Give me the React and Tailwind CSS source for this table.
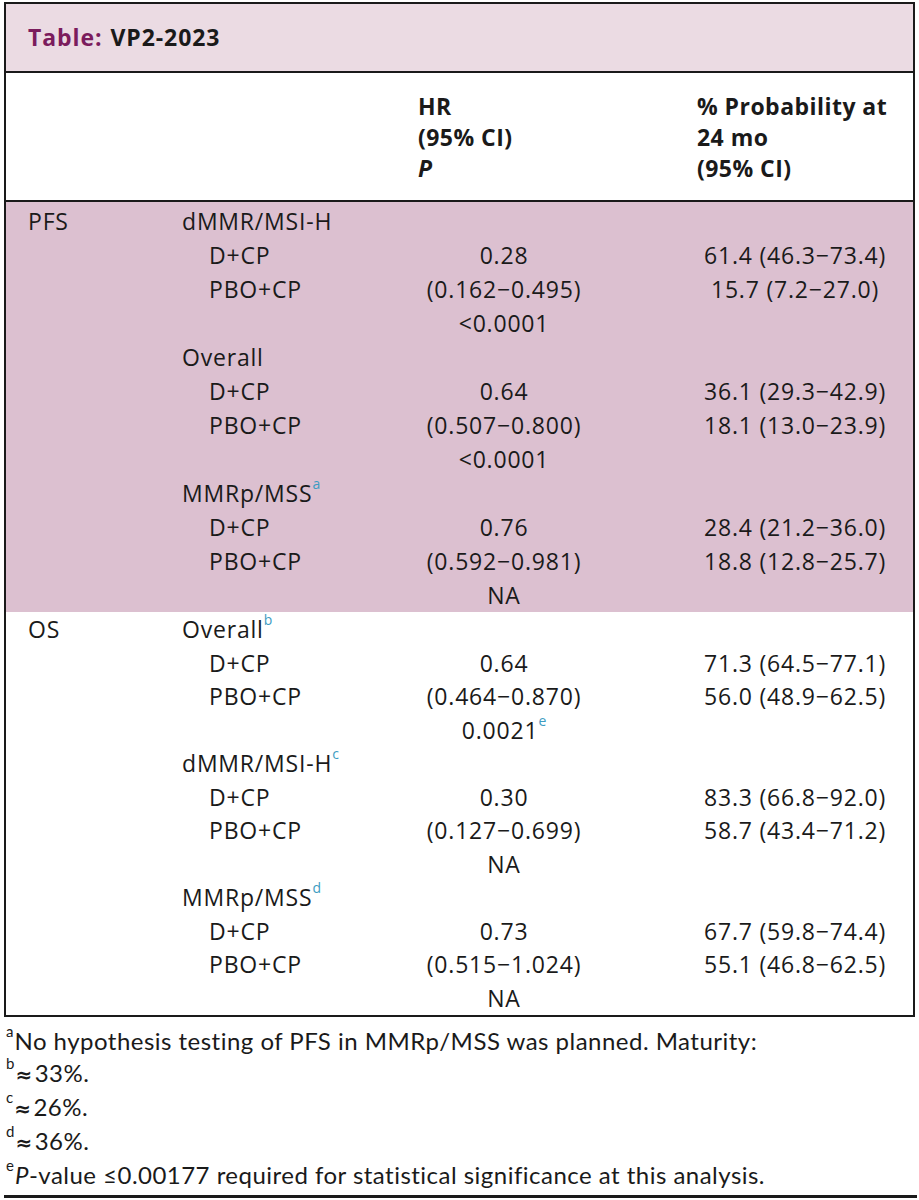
import React from "react";

const sup = "text-[#3d9cc2] text-[14px] align-[6px] leading-[0] tracking-normal";

const Row = ({ a, b, sub, hr, prob }) => (
    <div className="flex">
        <div className="w-[176px] pl-[22px]">{a}</div>
        <div className={sub ? "w-[236px] pl-[27px]" : "w-[236px]"}>{b}</div>
        <div className="w-[172px] text-center whitespace-nowrap">{hr}</div>
        <div className="w-[107px]"></div>
        <div className="w-[196px] text-center whitespace-nowrap">{prob}</div>
    </div>
);

const pfs = [
    { a: "PFS", b: "dMMR/MSI-H" },
    { b: "D+CP", sub: true, hr: "0.28", prob: "61.4 (46.3−73.4)" },
    { b: "PBO+CP", sub: true, hr: "(0.162−0.495)", prob: "15.7 (7.2−27.0)" },
    { hr: "<0.0001" },
    { b: "Overall" },
    { b: "D+CP", sub: true, hr: "0.64", prob: "36.1 (29.3−42.9)" },
    { b: "PBO+CP", sub: true, hr: "(0.507−0.800)", prob: "18.1 (13.0−23.9)" },
    { hr: "<0.0001" },
    { b: <>MMRp/MSS<sup className={sup}>a</sup></> },
    { b: "D+CP", sub: true, hr: "0.76", prob: "28.4 (21.2−36.0)" },
    { b: "PBO+CP", sub: true, hr: "(0.592−0.981)", prob: "18.8 (12.8−25.7)" },
    { hr: "NA" },
];

const os = [
    { a: "OS", b: <>Overall<sup className={sup}>b</sup></> },
    { b: "D+CP", sub: true, hr: "0.64", prob: "71.3 (64.5−77.1)" },
    { b: "PBO+CP", sub: true, hr: "(0.464−0.870)", prob: "56.0 (48.9−62.5)" },
    { hr: <>0.0021<sup className={sup}>e</sup></> },
    { b: <>dMMR/MSI-H<sup className={sup}>c</sup></> },
    { b: "D+CP", sub: true, hr: "0.30", prob: "83.3 (66.8−92.0)" },
    { b: "PBO+CP", sub: true, hr: "(0.127−0.699)", prob: "58.7 (43.4−71.2)" },
    { hr: "NA" },
    { b: <>MMRp/MSS<sup className={sup}>d</sup></> },
    { b: "D+CP", sub: true, hr: "0.73", prob: "67.7 (59.8−74.4)" },
    { b: "PBO+CP", sub: true, hr: "(0.515−1.024)", prob: "55.1 (46.8−62.5)" },
    { hr: "NA" },
];

const fsup = "text-[15px] align-[6px] leading-[0] mr-[1px] tracking-normal";
const approx = "font-['DejaVu_Sans',sans-serif] font-bold text-[20px] mr-[2px]";

export default function App() {
    return (
        <div className="w-[919px] h-[1200px] bg-white text-[#1a1a1a] pt-[2px] px-[4px] font-['Open_Sans','Liberation_Sans',sans-serif] text-[23px] tracking-[0.035em]">
            <div className="border-2 border-[#1a1a1a] w-[911px]">
                <div className="h-[69px] bg-[#ebdbe3] flex items-center pl-[22px] font-bold text-[23px] border-b-2 border-[#1a1a1a] tracking-[0.04em]">
                    <span className="text-[#7b1c5d]">Table:</span>
                    <span className="ml-[8px]">VP2-2023</span>
                </div>
                <div className="flex pt-[18px] pb-[16px] font-bold text-[23px] leading-[31px] border-b-2 border-[#1a1a1a] tracking-[0.02em]">
                    <div className="w-[412px]"></div>
                    <div className="w-[279px]">
                        <div>HR</div>
                        <div>(95% CI)</div>
                        <div className="italic">P</div>
                    </div>
                    <div>
                        <div>% Probability at</div>
                        <div>24 mo</div>
                        <div>(95% CI)</div>
                    </div>
                </div>
                <div className="bg-[#dcc0d0] pt-[2px] leading-[34px]">
                    {pfs.map((r, i) => <Row key={i} {...r} />)}
                </div>
                <div className="pt-[1px] leading-[33.5px]">
                    {os.map((r, i) => <Row key={i} {...r} />)}
                </div>
            </div>
            <div className="pt-[8px] leading-[32px] text-[24px] tracking-[0.02em] pl-[2px] font-['Lato','Liberation_Sans',sans-serif]">
                <div><sup className={fsup}>a</sup>No hypothesis testing of PFS in MMRp/MSS was planned. Maturity:</div>
                <div><sup className={fsup}>b</sup><span className={approx}>≈</span>33%.</div>
                <div><sup className={fsup}>c</sup><span className={approx}>≈</span>26%.</div>
                <div><sup className={fsup}>d</sup><span className={approx}>≈</span>36%.</div>
                <div><sup className={fsup}>e</sup><span className="italic">P</span>-value ≤0.00177 required for statistical significance at this analysis.</div>
            </div>
            <div className="mt-[4px] border-t-[3px] border-[#1a1a1a] w-[913px]"></div>
        </div>
    );
}
